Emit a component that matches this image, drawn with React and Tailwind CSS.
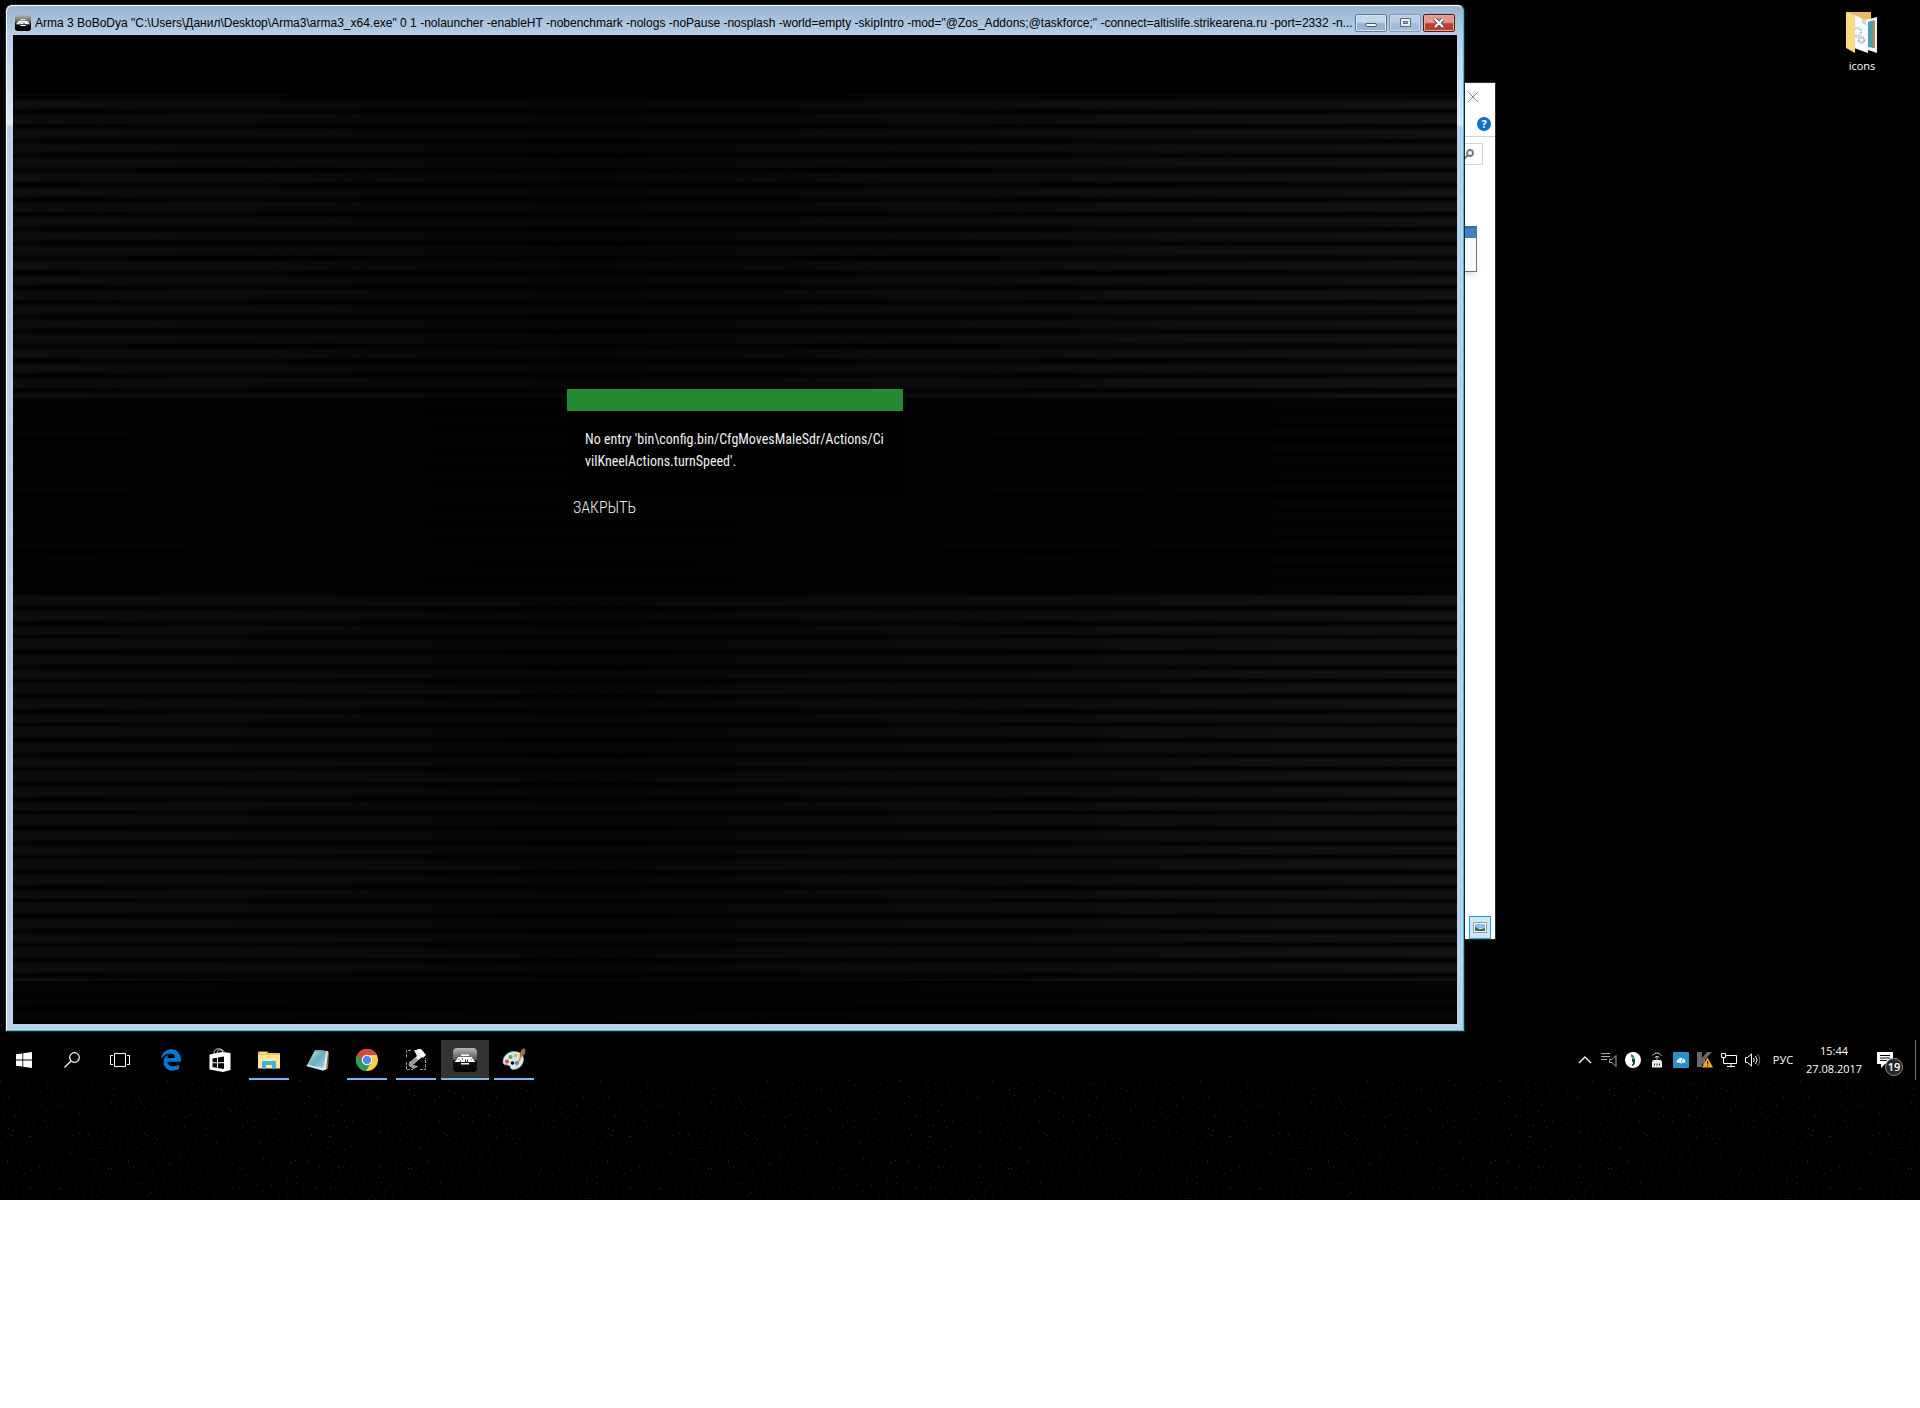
import React from 'react';
import { FaEdgeLegacy } from 'react-icons/fa6';

const WINDOW_TITLE =
  'Arma 3 BoBoDya "C:\\Users\\Данил\\Desktop\\Arma3\\arma3_x64.exe" 0 1 -nolauncher -enableHT -nobenchmark -nologs -noPause -nosplash -world=empty -skipIntro -mod="@Zos_Addons;@taskforce;" -connect=altislife.strikearena.ru -port=2332 -n...';

// Dim coloured specks under the taskbar, one tile that repeats sideways
const buildSpecks = (seed) => {
  let state = seed;
  const next = (max) => {
    state = (state * 16807) % 2147483647;
    return Math.floor((state / 2147483647) * max);
  };
  const specks = ['', ''];
  for (let y = 0; y < 120; y += 9) {
    for (let x = 0; x < 300; x += 10) {
      specks[next(5) < 3 ? 0 : 1] += `M${x + next(10)} ${y + next(9)}h1v1h-1z`;
    }
  }
  return specks;
};

const [greenSpecks, purpleSpecks] = buildSpecks(7717);

const StartIcon = () => (
  <svg viewBox="0 0 16 16" className="size-4" fill="#fff">
    <path d="M0 2.3 6.4 1.4V7.6H0zM7.2 1.3 16 0v7.6H7.2zM0 8.4h6.4v6.2L0 13.7zM7.2 8.4H16V16l-8.800-1.300z" />
  </svg>
);

const SearchIcon = () => (
  <svg viewBox="0 0 16 16" className="size-4" fill="none" stroke="#fff" strokeWidth="1.2">
    <circle cx="10.5" cy="5.5" r="4.8" />
    <path d="M7 9 .5 15.5" />
  </svg>
);

const TaskViewIcon = () => (
  <svg viewBox="0 0 20 14" className="h-3.5 w-5" fill="none" stroke="#fff">
    <path d="M4.5.5h11v13h-11zM3 2.5H.5v9H3M17 2.5h2.5v9H17" />
  </svg>
);

const StoreIcon = () => (
  <svg viewBox="0 0 22 24" className="h-6 w-5.5">
    <path d="M5 6C5 2 7 .8 9.500.8s4 1.500 4 4.200M8 5c.3-2.500 2-3.500 4-3.300 2 .2 3 1.300 3.200 3.300" fill="none" stroke="#ddd" />
    <path d="M.5 6.500 13 4l8.500 1v17L14 24 .5 21.500z" fill="#fff" />
    <path d="M3.500 10.400 8 9.700v4.600H3.500zM9 9.500 15 8.600v5.700H9zM3.500 15.200H8v4.600l-4.500-.6zM9 15.200h6v5.700l-6-.8z" fill="#000" />
  </svg>
);

const ExplorerIcon = () => (
  <svg viewBox="0 0 22 18" className="h-4.5 w-5.5">
    <path d="M0 1.500Q0 .5 1 .5h8l1.500 1.500H21q1 0 1 1V17H0z" fill="#f0c453" />
    <path d="M2 1.500h6v1H2z" fill="#fff6d0" />
    <path d="M0 4h22v13.500H0z" fill="#ffe594" />
    <path d="M4 17.800V11q0-1 1-1h12q1 0 1 1v6.800h-4V14H8v3.800z" fill="#35b3ea" />
  </svg>
);

const NotepadIcon = () => (
  <svg viewBox="0 0 24 24" className="size-6">
    <defs>
      <linearGradient id="pad" x1="0" y1="0" x2="1" y2="1">
        <stop offset="0" stopColor="#d7eff3" />
        <stop offset=".5" stopColor="#67aebd" />
        <stop offset="1" stopColor="#b5e2ea" />
      </linearGradient>
    </defs>
    <path d="m21 3 2 1-1 17-4 1z" fill="#8c7442" />
    <path d="M9 2.500 22 3l-2 18.500-3 1z" fill="#e5eced" />
    <path d="M9 2 20.500 3 17 22.500.5 18z" fill="url(#pad)" />
    <path d="M9 2 20.500 3l-.3 1.500L8.500 3.500z" fill="#8fa0a5" />
    <path d="m1.500 16.500 16 4-.5 2L.5 18z" fill="#d3f0f4" />
  </svg>
);

const ChromeIcon = () => (
  <svg viewBox="0 0 22 22" className="size-5.5">
    <circle cx="11" cy="11" r="11" fill="#fbcf41" />
    <path d="M11 11 1.500 5.500A11 11 0 0 0 9.800 21.950L15.500 13.500z" fill="#26a05a" />
    <path d="M1.500 5.500A11 11 0 0 1 20.800 6H11L6.500 13.500z" fill="#db4638" />
    <circle cx="11" cy="11" r="5.200" fill="#fff" />
    <circle cx="11" cy="11" r="4.200" fill="#4c88ef" />
  </svg>
);

const MacroIcon = () => (
  <svg viewBox="0 0 22 22" className="size-5.5">
    <path d="M1.500 8V1.500H7M15 20.500h5.500V9M1.500 13v7.500H8" fill="none" stroke="#999" strokeDasharray="3 1" />
    <path d="M9 1h6l5 5-6.500 5-7 6L4 14l8-7z" fill="#eee" />
    <path d="m13.500 11-6 4.500 6 2-5 2.500-5-3.500.5-3 6.500-5z" fill="#9a9a9a" />
    <path d="m12 0 4 0 5 6-3 3z" fill="#fff" />
  </svg>
);

const ArmaIcon = ({ className }) => (
  <svg viewBox="0 0 24 24" className={className}>
    <defs>
      <linearGradient id="arma" x1="0" y1="0" x2="0" y2="1">
        <stop offset="0" stopColor="#b5b5b5" />
        <stop offset=".48" stopColor="#555" />
        <stop offset=".52" stopColor="#111" />
        <stop offset="1" stopColor="#000" />
      </linearGradient>
    </defs>
    <rect width="24" height="24" rx="4" fill="url(#arma)" />
    <path d="M8 6.500h8V8H8zM8 15h8v1.500H8z" fill="#fff" />
    <path d="m1.500 14 4-5h13l4 5z" fill="#fff" />
    <path d="m5.500 11.500.8 0M8.500 11h1.500M7.500 14v-1.500M12.500 14v-2.500M14.500 14v-2.500M18 11.500l.7 0" stroke="#333" />
  </svg>
);

const PaintIcon = () => (
  <svg viewBox="0 0 24 24" className="size-6">
    <path d="M1 14C1 8 6 3.500 12 3.500S22 7 21.500 12 17 21.500 11 21.500c-3 0-2-3-4-4S1 18 1 14z" fill="#d5e9f3" stroke="#8fb4c8" strokeWidth=".6" />
    <circle cx="10.500" cy="15" r="1.800" fill="#000" />
    <circle cx="5" cy="13.500" r="2" fill="#dd4a35" />
    <circle cx="8.500" cy="9" r="2" fill="#55a63b" />
    <circle cx="13.500" cy="7.500" r="2" fill="#eab52f" />
    <circle cx="15" cy="15" r="2" fill="#3f86cc" />
    <path d="M12.500 23 18 8l2 .8z" fill="#e48b26" />
    <path d="M18 8.500C17 5 19 4 20 1l3-.5c1 3 0 6-3 8.500z" fill="#a8713b" />
  </svg>
);

const FolderIcon = () => (
  <svg viewBox="0 0 32 42" className="h-[42px] w-8">
    <path d="M0 0h25v36H0z" fill="#e6bd5e" />
    <path d="M19 8 31 5v36l-9-3z" fill="#f3f6f7" />
    <path d="M22 10 28 8v28l-6-1z" fill="#4a9db1" />
    <path d="M26 9h3v27h-3z" fill="#9a8b6a" />
    <path d="m9 3 10 5 3 5v28L8 36z" fill="#fafafa" />
    <path d="m15 6 4 2 3 6-6-3z" fill="#d6d6d6" />
    <circle cx="11" cy="20" r="4" fill="none" stroke="#b9c7d4" strokeWidth="2.500" strokeDasharray="2 1" />
    <circle cx="15.500" cy="28" r="2.800" fill="none" stroke="#9fb4c8" strokeWidth="2" strokeDasharray="1.500 .8" />
    <path d="M0 0 9 3.500v37.500L0 36z" fill="#fbdc83" />
  </svg>
);

const ChevronIcon = () => (
  <svg viewBox="0 0 16 16" className="size-4" fill="none" stroke="#fff" strokeWidth="1.300">
    <path d="m2 11 6-6 6 6" />
  </svg>
);

const PlaylistIcon = () => (
  <svg viewBox="0 0 16 16" className="size-4" fill="none" stroke="#aaa">
    <path d="M0 1.500h9M0 4.500h9M0 7.500h6M8.500 7.500h2.500l4-4v11l-4-4H8.500z" />
  </svg>
);

const JivoIcon = () => (
  <svg viewBox="0 0 16 16" className="size-4">
    <circle cx="8" cy="8" r="8" fill="#fff" />
    <path d="M6 2c3 1 4 3 3.500 6C7 7 5.500 5 6 2z" fill="#14a05c" />
    <path d="M7 7h3v3q0 3-3 4l-.5-1q2-1 1.500-3H7z" fill="#273a4c" />
  </svg>
);

const RouterIcon = () => (
  <svg viewBox="0 0 16 16" className="size-4">
    <path d="M3.500 3.500q4.500-5 9 0M5.500 5.500q2.500-2.500 5 0M8 5v4" fill="none" stroke="#ccc" />
    <path d="M4 8h8l1 2v5.500H3V10z" fill="#eee" />
    <path d="M5 11.500h1v2H5zM7.500 11.500h1v2h-1zM10 11.500h1v2h-1z" fill="#222" />
  </svg>
);

const GaugeIcon = () => (
  <svg viewBox="0 0 16 16" className="size-4">
    <rect width="16" height="16" rx="1" fill="#2a8fcb" />
    <path d="M3.500 10.500a4.500 4.500 0 0 1 9 0H10L8 11.500 6 10.500z" fill="#fff" />
    <path d="m8 10.500 2-4M5.500 7.500l1 1" stroke="#2a8fcb" />
  </svg>
);

const AntivirusIcon = () => (
  <svg viewBox="0 0 16 16" className="size-4">
    <path d="M0 0h5v6l5-6h5L8 8l4 7H7L5 11v4H0z" fill="#686868" />
    <path d="M10.500 5.500 16 15.500H5z" fill="#f6a821" />
    <path d="M10 9h1.200v3.500H10zM10 13.300h1.200v1.200H10z" fill="#3b2600" />
  </svg>
);

const NetworkIcon = () => (
  <svg viewBox="0 0 16 16" className="size-4" fill="none" stroke="#fff">
    <path d="M4.500 3.500h11v8h-11M10 11.500v3M6 14.500h8M.5 1.500h4v4h-4zM2.500 5.500v6h3" />
  </svg>
);

const VolumeIcon = () => (
  <svg viewBox="0 0 16 16" className="size-4" fill="none" stroke="#fff">
    <path d="M.5 5.500h2l4-3.500v12l-4-3.500h-2zM8.500 6q1.500 2 0 4M10.500 4q3 4 0 8" />
    <path d="M12.500 2q4.500 6 0 12" stroke="#777" />
  </svg>
);

const NotificationIcon = () => (
  <svg viewBox="0 0 16 16" className="size-4">
    <path d="M0 0h16v12H8l-4 4v-4H0z" fill="#fff" />
    <path d="M3 3.500h10M3 6h10M3 8.500h7" stroke="#000" />
  </svg>
);

const apps = [
  { name: 'Microsoft Edge', icon: <FaEdgeLegacy className="size-5.5 text-[#0078d7]" /> },
  { name: 'Store', icon: <StoreIcon /> },
  { name: 'File Explorer', icon: <ExplorerIcon />, running: true },
  { name: 'Notepad', icon: <NotepadIcon /> },
  { name: 'Chrome', icon: <ChromeIcon />, running: true },
  { name: 'Macro', icon: <MacroIcon />, running: true },
  { name: 'Arma 3', icon: <ArmaIcon className="size-6" />, running: true, active: true },
  { name: 'Paint', icon: <PaintIcon />, running: true },
];

const trayItems = [
  { name: 'Show hidden icons', icon: <ChevronIcon /> },
  { name: 'Audio manager', icon: <PlaylistIcon /> },
  { name: 'Messenger', icon: <JivoIcon /> },
  { name: 'Router', icon: <RouterIcon /> },
  { name: 'Performance', icon: <GaugeIcon /> },
  { name: 'Antivirus', icon: <AntivirusIcon /> },
  { name: 'Network', icon: <NetworkIcon /> },
  { name: 'Volume', icon: <VolumeIcon /> },
];

const ExplorerWindow = () => (
  <section className="absolute top-[82px] left-[1096px] flex h-[858px] w-[400px] flex-col items-end border border-[#2b2b2b] bg-white">
    <button aria-label="Close folder" className="mt-2 mr-4 p-px">
      <svg viewBox="0 0 10 10" className="size-2.5" stroke="#888">
        <path d="m0 0 10 10M10 0 0 10" />
      </svg>
    </button>
    <div className="mt-2 flex h-[26px] w-full items-center justify-end border-b border-gray-300 pr-1">
      <button aria-label="Help" className="size-3.5 rounded-full bg-[#0b6fd0] font-['Open_Sans',sans-serif] text-[11px] leading-3.5 font-bold text-white">
        ?
      </button>
    </div>
    <div className="mt-1.5 mr-3 flex h-5.5 w-40 items-center justify-end border border-gray-300 pr-2">
      <svg viewBox="0 0 10 10" className="size-2.5" fill="none" stroke="#777" strokeWidth="1.800">
        <circle cx="6" cy="4" r="3" />
        <path d="M4 6 .5 9.500" />
      </svg>
    </div>
    <div className="mt-[61px] mr-4.5 h-[46px] w-40 border-r border-b border-gray-500 bg-[#fbfbfb] shadow-md">
      <div className="h-3 border-t-2 border-[#2470b0] bg-[#3f81c4]" />
    </div>
    <div className="mt-auto mr-1 flex items-center gap-1">
      <svg viewBox="0 0 4 10" className="h-2.5 w-1" stroke="#777">
        <path d="M0 .5h4M0 4.500h4M0 8.500h4" />
      </svg>
      <button aria-label="Large thumbnails" className="flex h-[23px] w-[22px] items-center justify-center border border-[#26a0da] bg-[#cbe8f6]">
        <svg viewBox="0 0 14 11" className="h-[11px] w-3.5">
          <path d="M.5.5h13v10H.5z" fill="#fff" stroke="#999" />
          <path d="M2 2h10v4H2z" fill="#8dbcf5" />
          <path d="m2 5 5 2 5-1v3H2z" fill="#3d6f63" />
        </svg>
      </button>
    </div>
  </section>
);

const ErrorDialog = () => (
  <div className="absolute inset-x-0 top-[354px] flex justify-center">
    <div role="alertdialog" className="w-[336px] bg-black font-['Roboto_Condensed',Roboto,sans-serif] text-[#f0f0f0]">
      <div className="h-[22px] bg-[#228934]" />
      <p className="px-[18px] pt-[17px] pb-6 text-[14px] leading-[22px]">
        No entry 'bin\config.bin/CfgMovesMaleSdr/Actions/Ci
        <br />
        vilKneelActions.turnSpeed'.
      </p>
      <div className="grid h-6 grid-cols-3 gap-px">
        <button className="bg-[#020202] pl-1.5 text-left text-[16px] leading-6 font-light">ЗАКРЫТЬ</button>
        <div className="bg-[#020202]" />
        <div className="bg-[#020202]" />
      </div>
    </div>
  </div>
);

const GameWindow = () => (
  <section className="absolute top-[5px] left-1.5 flex h-[1026px] w-[1458px] flex-col rounded-t-md border border-t-white border-r-[#2fc0e4] border-b-[#2fc0e4] border-l-white bg-[#bad1ea] shadow-[0_0_0_1px_#222]">
    <header className="flex h-[29px] shrink-0 items-center rounded-t-md bg-linear-to-b from-[#9ab3d0] to-[#b6cfe9] pt-1 pr-2 pl-2">
      <ArmaIcon className="size-4 shrink-0" />
      <h1 className="ml-1 flex-1 truncate font-['Liberation_Sans',sans-serif] text-[12px] leading-4 text-black">{WINDOW_TITLE}</h1>
      <div className="flex gap-0.5">
        <button aria-label="Minimize" className="flex h-[18px] w-8 items-center justify-center rounded-xs border border-[#5f7896] bg-linear-to-b from-[#c3d6ea] from-45% to-[#98b3d1] to-55% shadow-[inset_0_0_0_1px_#d7e4f2]">
          <span className="mt-1 h-1 w-3 rounded-xs border border-[#4f5b6b] bg-white" />
        </button>
        <button aria-label="Maximize" className="flex h-[18px] w-8 items-center justify-center rounded-xs border border-[#8199b5] bg-linear-to-b from-[#b9cee5] from-45% to-[#a3bdd9] to-55% shadow-[inset_0_0_0_1px_#c3d6ea]">
          <svg viewBox="0 0 11 9" className="h-[9px] w-[11px]">
            <path d="M.5.5h10v8H.5z" fill="#e8eef5" stroke="#5d6779" />
            <path d="M3.500 3.500h4v2h-4z" fill="#9db5d0" stroke="#5d6779" />
          </svg>
        </button>
        <button aria-label="Close" className="flex h-[18px] w-8 items-center justify-center rounded-xs border border-[#4f1a1d] bg-linear-to-b from-[#e39a8e] from-45% to-[#b8402c] to-55% shadow-[inset_0_0_0_1px_#e8a79b]">
          <svg viewBox="0 0 12 10" className="h-2.5 w-3">
            <path d="m2 1 8 8M10 1 2 9" stroke="#4a4f5c" strokeWidth="4" />
            <path d="m2 1 8 8M10 1 2 9" stroke="#fff" strokeWidth="2.200" />
          </svg>
        </button>
      </div>
    </header>
    <div className="flex flex-1 bg-[linear-gradient(#b6cfe9,#dfe8f5_90px,#bad1ea_91px)] px-1.5 pb-1.5">
      <main className="relative flex flex-1 flex-col bg-black">
        <div className="h-[59px]" />
        <div className="h-[304px] bg-[repeating-linear-gradient(#0d0c0c_0,#000_3px,#131112_8px,#131112_13px,#000_17px,#131112_22px,#131112_28px,#000_32px,#131112_37px,#131112_42px,#0d0c0c_44px)]" />
        <div className="h-[197px] bg-[repeating-linear-gradient(#010101_0,#050505_7px,#010101_14px)]" />
        <div className="h-[386px] bg-[repeating-linear-gradient(#0d0c0c_0,#131112_3px,#131112_9px,#000_13px,#131112_18px,#131112_24px,#000_28px,#131112_33px,#131112_38px,#000_42px,#0d0c0c_44px)]" />
        <div className="flex-1 bg-[repeating-linear-gradient(#010101_0,#080707_7px,#010101_14px)]" />
        <div className="absolute inset-0 bg-linear-to-r from-black/25 via-black/60 via-40% to-transparent" />
        <ErrorDialog />
      </main>
    </div>
  </section>
);

const Taskbar = () => (
  <footer className="flex h-10 items-stretch">
    <button aria-label="Start" className="flex w-12 items-center justify-center">
      <StartIcon />
    </button>
    <button aria-label="Search" className="flex w-12 items-center justify-center">
      <SearchIcon />
    </button>
    <button aria-label="Task view" className="flex w-12 items-center justify-center">
      <TaskViewIcon />
    </button>
    <nav className="ml-[3px] flex gap-px">
      {apps.map((app) => (
        <button
          key={app.name}
          aria-label={app.name}
          className={`flex w-12 flex-col items-center ${app.active ? 'bg-[#333]' : ''}`}
        >
          <span className="flex flex-1 items-center pt-0.5">{app.icon}</span>
          <span className={`h-0.5 ${app.active ? 'w-12' : 'w-10'} ${app.running ? 'bg-[#76b9ed]' : ''}`} />
        </button>
      ))}
    </nav>
    <div className="ml-auto flex items-center font-['Open_Sans',sans-serif] text-white">
      <div className="flex gap-2">
        {trayItems.map((item) => (
          <button key={item.name} aria-label={item.name}>
            {item.icon}
          </button>
        ))}
      </div>
      <button className="ml-2.5 w-6 text-[11px] leading-[18px]">РУС</button>
      <button className="ml-1.5 w-[66px] text-center text-[11px] leading-[18px]">
        15:44
        <br />
        27.08.2017
      </button>
      <button aria-label="Notifications" className="relative ml-2.5 w-[38px]">
        <NotificationIcon />
        <span className="absolute top-1.5 left-2 flex size-[18px] items-center justify-center rounded-full border border-[#888] bg-[#262626] text-[11px] leading-3 font-semibold">
          19
        </span>
      </button>
      <div className="mr-1 h-10 w-px bg-[#777]" />
    </div>
  </footer>
);

export default function App() {
  return (
    <div className="min-h-screen bg-white">
      <div className="bg-black">
        <div className="relative h-[1040px]">
          <a href="#icons" className="absolute top-3 right-5 flex w-[76px] flex-col items-center font-['Open_Sans',sans-serif] text-[11px] leading-4 text-white">
            <FolderIcon />
            <span className="mt-1">icons</span>
          </a>
          <ExplorerWindow />
          <GameWindow />
        </div>
        <Taskbar />
        <svg className="block h-[120px] w-full" aria-hidden="true" shapeRendering="crispEdges">
          <defs>
            <pattern id="specks" width="300" height="120" patternUnits="userSpaceOnUse">
              <path d={greenSpecks} fill="#0a3d0e" />
              <path d={purpleSpecks} fill="#450648" />
            </pattern>
          </defs>
          <rect width="100%" height="120" fill="url(#specks)" />
        </svg>
      </div>
    </div>
  );
}
